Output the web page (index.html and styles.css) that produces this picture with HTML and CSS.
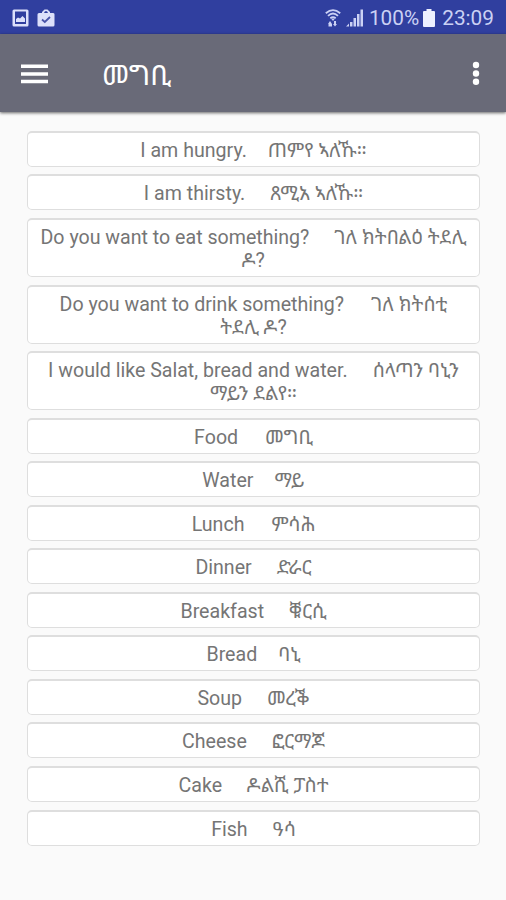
FILE: index.html
```
<!DOCTYPE html>
<html lang="ti">
<head>
<meta charset="utf-8">
<title>መግቢ</title>
<link rel="stylesheet" href="styles.css">
</head>
<body>
<header class="status">
  <div class="status-left">
    <svg width="17" height="18" viewBox="0 0 17 18"><path fill="#dce0fa" fill-rule="evenodd" d="M2 0.5h13a1.5 1.5 0 0 1 1.5 1.5v14a1.5 1.5 0 0 1-1.5 1.5H2A1.5 1.5 0 0 1 .5 16V2A1.5 1.5 0 0 1 2 .5zM3 2.500v12.500h11V2.500z"/><path fill="#dce0fa" d="M4 13v-3l2-1.500 2 1 2.500-2.500 2.500 2.500V13z"/></svg>
    <svg width="18" height="18" viewBox="0 0 18 18"><path fill="#dce0fa" fill-rule="evenodd" d="M5 4V3l2.500-2.500h3L13 3v1h2.500A1.500 1.500 0 0 1 17.500 5.500V16a1.500 1.500 0 0 1-1.500 1.500h-14A1.500 1.500 0 0 1 .5 16V5.500A1.500 1.500 0 0 1 2 4zM7 4h4L10 2.300H8z"/><path d="M5 10.500l2.800 2.500L13 8" fill="none" stroke="#4853a8" stroke-width="1.800"/></svg>
  </div>
  <div class="status-right">
    <svg width="16" height="18" viewBox="0 0 16 18"><g fill="none" stroke="#cbd1f4" stroke-width="1.800"><path d="M.8 4.300Q8-2 15.200 4.300"/><path d="M3 6.800Q8 2.300 13 6.800"/><path d="M5.300 9.200Q8 7 10.700 9.200"/></g><path fill="#cbd1f4" d="M6 9.500h4L8 12zM3 15l2-3 2 3v2.500H3.500V15zM9 12h2v3h1l-2 2.500L8 15h1z"/></svg>
    <svg class="signal" width="18" height="18" viewBox="0 0 18 18"><path fill="#cbd1f4" d="M0 17.500l3-3v3zM4 13h2.500v4.500H4zM7.500 9H10v8.500H7.500zM11 5h2.500v12.500H11zM14.500 0.500H17v17h-2.500z"/></svg>
    <span class="percent">100%</span>
    <svg class="battery" width="12" height="18" viewBox="0 0 12 18"><path fill="#edf0ff" d="M3.500 0h5v2H11a1 1 0 0 1 1 1v14a1 1 0 0 1-1 1H1a1 1 0 0 1-1-1V3a1 1 0 0 1 1-1h2.500z"/></svg>
    <span class="clock">23:09</span>
  </div>
</header>
<nav class="bar">
  <svg width="28" height="20" viewBox="0 0 28 20"><path fill="#fff" d="M0 .5h27v3.500H0zM0 8.200h27v3.500H0zM0 15.700h27v3.500H0z"/></svg>
  <h1>መግቢ</h1>
  <svg class="more" width="8" height="25" viewBox="0 0 8 25"><g fill="#fff"><circle cx="4" cy="4" r="3.200"/><circle cx="4" cy="12.500" r="3.200"/><circle cx="4" cy="20.700" r="3.200"/></g></svg>
</nav>
<main class="list">
  <p class="item near"><span class="en">I am hungry.</span><span class="ti">ጠምየ ኣለኹ።</span></p>
  <p class="item"><span class="en">I am thirsty.</span><span class="ti">ጸሚአ ኣለኹ።</span></p>
  <p class="item"><span class="en">Do you want to eat something?</span><span class="ti">ገለ ክትበልዕ ትደሊ</span><br><span class="ti">ዶ?</span></p>
  <p class="item wide"><span class="en">Do you want to drink something?</span><span class="ti">ገለ ክትሰቲ</span><br><span class="ti">ትደሊ ዶ?</span></p>
  <p class="item"><span class="en">I would like Salat, bread and water.</span><span class="ti">ሰላጣን ባኒን</span><br><span class="ti">ማይን ደልየ።</span></p>
  <p class="item wide"><span class="en">Food</span><span class="ti">መግቢ</span></p>
  <p class="item near"><span class="en">Water</span><span class="ti">ማይ</span></p>
  <p class="item wide"><span class="en">Lunch</span><span class="ti">ምሳሕ</span></p>
  <p class="item"><span class="en">Dinner</span><span class="ti">ድራር</span></p>
  <p class="item"><span class="en">Breakfast</span><span class="ti">ቑርሲ</span></p>
  <p class="item near"><span class="en">Bread</span><span class="ti">ባኒ</span></p>
  <p class="item"><span class="en">Soup</span><span class="ti">መረቕ</span></p>
  <p class="item"><span class="en">Cheese</span><span class="ti">ፎርማጆ</span></p>
  <p class="item"><span class="en">Cake</span><span class="ti">ዶልሺ ፓስተ</span></p>
  <p class="item"><span class="en">Fish</span><span class="ti">ዓሳ</span></p>
</main>
</body>
</html>
```
FILE: styles.css
```
* { box-sizing: border-box; }
body { margin: 0; height: 900px; background: #fafafa; font-family: Roboto, "Noto Sans Ethiopic", "Noto Sans", sans-serif; overflow: hidden; }
.status { height: 34px; background: #303f9f; display: flex; justify-content: space-between; align-items: center; padding: 1px 12px 0; color: #cbd1f4; font-size: 20.800px; }
.status-left, .status-right { display: flex; align-items: center; }
.status-left { gap: 8px; }
.signal { margin-left: 5px; }
.percent { margin-left: 5px; }
.battery { margin-left: 4px; }
.clock { margin-left: 7px; }
.bar { height: 78px; background: #696a78; display: flex; align-items: center; padding: 1px 26px 0 21px; box-shadow: 0 1px 3px rgba(0, 0, 0, .6); }
.bar h1 { margin: 1px 0 0 53px; color: #fff; font-size: 28.500px; font-weight: 400; white-space: nowrap; }
.more { margin-left: auto; }
.list { display: flex; flex-direction: column; gap: 7.550px; padding: 18.900px 26px 0 27px; }
.item { margin: 0; padding: 6px 0 4px; background: #fff; border: 1px solid #dedede; border-top-width: 2px; border-radius: 5px; color: #757575; font-size: 19.600px; line-height: 23px; text-align: center; white-space: nowrap; }
.en { margin-right: 25px; }
.near .en { margin-right: 21px; }
.wide .en { margin-right: 27px; }
.ti { font-size: 19.700px; line-height: 1; }
```
